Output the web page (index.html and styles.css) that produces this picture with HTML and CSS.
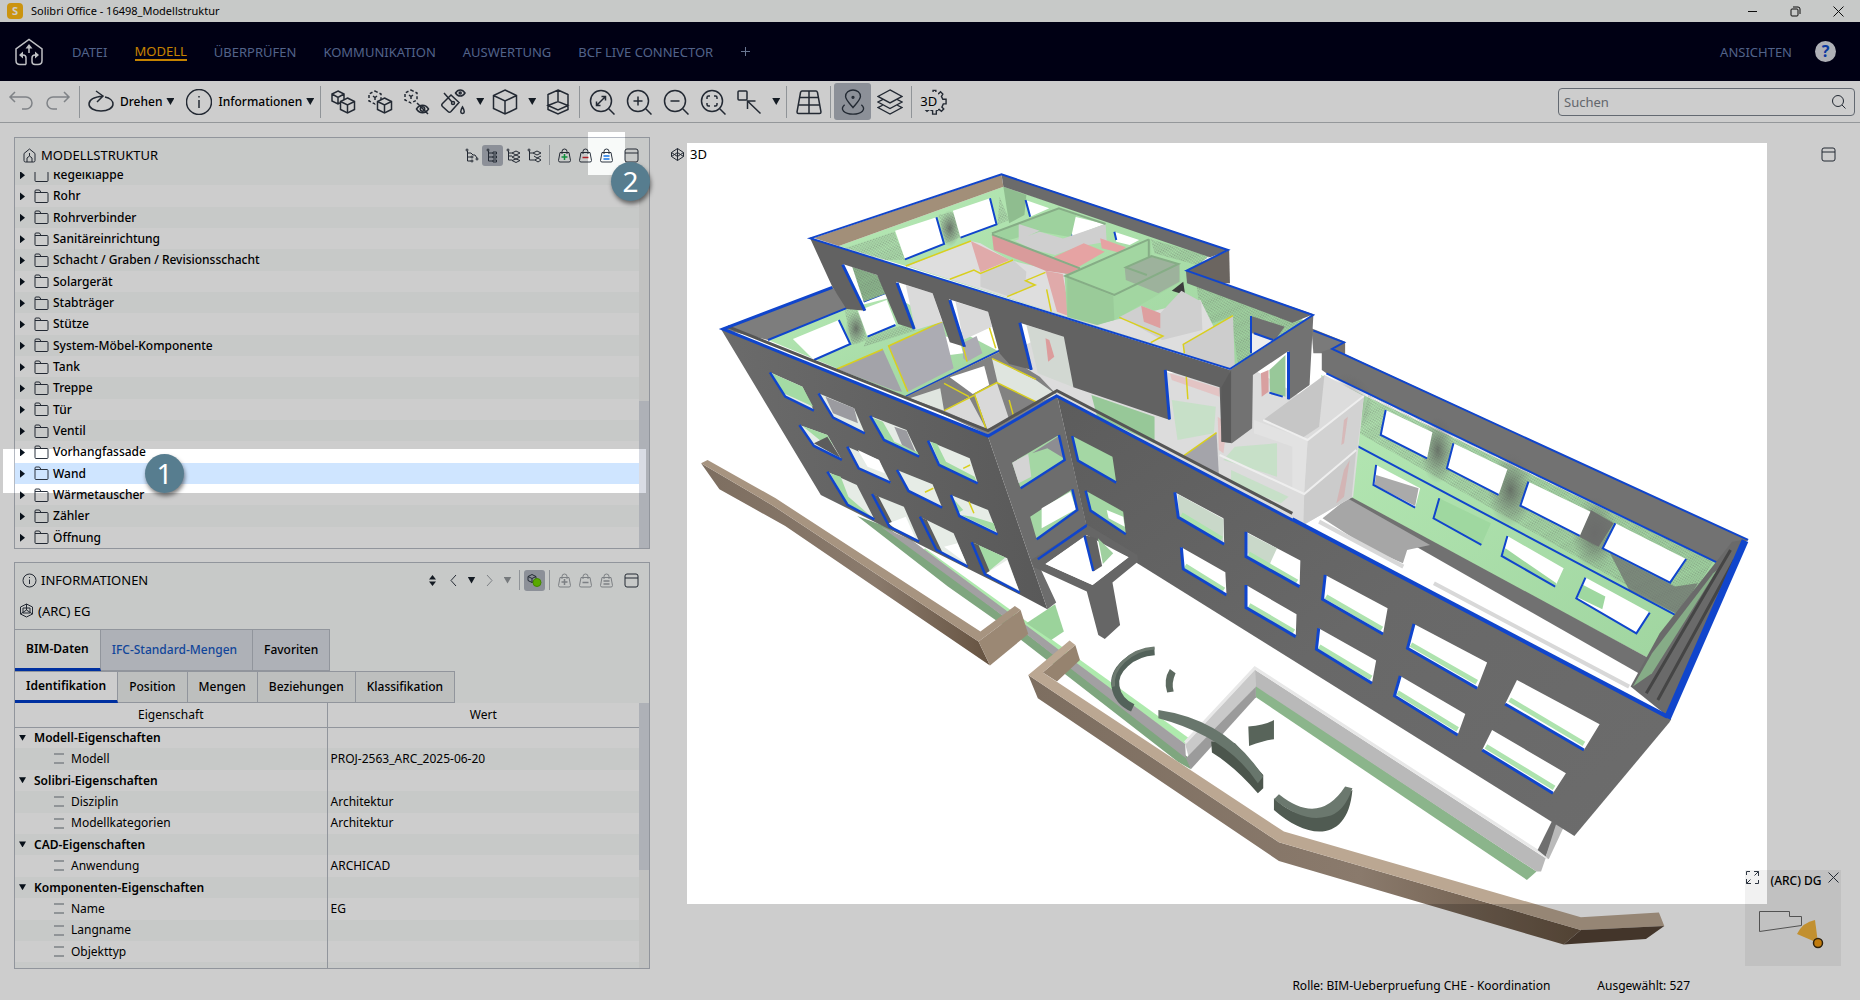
FILE: index.html
```html
<!DOCTYPE html>
<html lang="de">
<head>
<meta charset="utf-8">
<title>Solibri Office - 16498_Modellstruktur</title>
<meta name="viewport" content="width=device-width, initial-scale=1">
<link rel="stylesheet" href="styles.css">
</head>
<body>
<svg class="defs" aria-hidden="true">
  <defs>
    <symbol id="i-undo" viewBox="0 0 26 26"><path d="M7 3 2 8l5 5M2 8h16a5.500 5.500 0 0 1 0 12h-4"/></symbol>
    <symbol id="i-redo" viewBox="0 0 26 26"><path d="m19 3 5 5-5 5M24 8H8a5.500 5.500 0 0 0 0 12h4"/></symbol>
    <symbol id="i-orbit" viewBox="0 0 26 26"><path d="M8 2l7 5-6 6M15 7C6 8 1 11 1 15c0 4 5 7 12 7s12-3 12-7c0-3-3-6-8-7"/></symbol>
    <symbol id="i-info" viewBox="0 0 26 26"><circle cx="13" cy="13" r="12.500"/><path d="M13 11v8M13 7v1.500"/></symbol>
    <symbol id="i-cubes" viewBox="0 0 26 26"><path d="M8 2l6 3v7l-6 3-6-3V5zM2 5l6 3.500L14 5M8 8.500V15"/><path class="knock" d="M17.500 9l7 3.500v8l-7 3.500-7-3.500v-8z"/><path d="M10.500 12.500l7 3.500 7-3.500M17.500 16v8"/></symbol>
    <symbol id="i-cubes-dash" viewBox="0 0 26 26"><path stroke-dasharray="3 2" d="M8 2l6 3v7l-6 3-6-3V5z"/><path d="M6 7l2 1.500L10 7M8 8.500V11"/><path class="knock" d="M17.500 9l7 3.500v8l-7 3.500-7-3.500v-8z"/><path d="M10.500 12.500l7 3.500 7-3.500M17.500 16v8"/></symbol>
    <symbol id="i-cube-hide" viewBox="0 0 26 26"><path stroke-dasharray="3 2" d="M7 1l6 3v7l-6 3-6-3V4z"/><path d="M5 6l2 1.500L9 6M7 7.500V10M12.500 20c3-5 9-5 12 0-3 5-9 5-12 0zM13 14l11 11"/><circle cx="18.500" cy="20" r="2.200"/></symbol>
    <symbol id="i-bucket" viewBox="0 0 26 26"><path d="M11 6l8 7.500-8 9q-1.500 1.500-3 0l-5.500-5q-1.500-1.500 0-3zM4 4l8 9M15.500 4c2.500-4 7-4 9.500 0-2.500 4-7 4-9.500 0zM22.500 18q3.500 6 0 6.500-3.500-.5 0-6.500z"/><circle cx="13" cy="14" r="1.500"/><circle cx="20.200" cy="4" r="1"/></symbol>
    <symbol id="i-cube" viewBox="0 0 26 26"><path d="M13 1l11.500 5.500v13L13 25 1.500 19.500v-13zM1.500 6.500L13 12l11.500-5.500M13 12v13"/></symbol>
    <symbol id="i-section" viewBox="0 0 26 26"><path d="M13 1l10 4.500v15L13 25 3 20.500v-15zM13 1v12M3 16.500l10-4 10 4-10 4.500zM3 5.500L13 1l10 4.500"/></symbol>
    <symbol id="i-zoomfit" viewBox="0 0 26 26"><circle cx="12" cy="12" r="10.500"/><path d="M19.500 19.500l6 6M8 16l8-8M12.500 7.500h4v4M7.500 12.500v4h4"/></symbol>
    <symbol id="i-zoomin" viewBox="0 0 26 26"><circle cx="12" cy="12" r="10.500"/><path d="M19.500 19.500l6 6M7.500 12h9M12 7.500v9"/></symbol>
    <symbol id="i-zoomout" viewBox="0 0 26 26"><circle cx="12" cy="12" r="10.500"/><path d="M19.500 19.500l6 6M7.500 12h9"/></symbol>
    <symbol id="i-zoomsel" viewBox="0 0 26 26"><circle cx="12" cy="12" r="10.500"/><path d="M19.500 19.500l6 6M7 10V8.500Q7 7 8.500 7H10M14 7h1.500Q17 7 17 8.500V10M17 14v1.500q0 1.500-1.500 1.500H14M10 17H8.500Q7 17 7 15.500V14"/></symbol>
    <symbol id="i-pick" viewBox="0 0 26 26"><path d="M3 2h7q1 0 1 1v7q0 1-1 1H3q-1 0-1-1V3q0-1 1-1zM24.500 24.500L12 12.500M11.500 20v-8h8"/></symbol>
    <symbol id="i-grid" viewBox="0 0 26 26"><path d="M6 2h14q1 0 1.500 1.500L25 23q0 1.500-1.500 1.500h-21Q1 24.500 1 23L4.500 3.500Q5 2 6 2zM4 8.500h18M2.500 16h21M13 2v22.500"/></symbol>
    <symbol id="i-pin" viewBox="0 0 28 28"><path d="M14 20C9 14 6 11 6 8a8 7 0 0 1 16 0c0 3-3 6-8 12zM5 17c-6 5 0 10 9 10s15-5 9-10"/><circle cx="14" cy="9" r="1"/></symbol>
    <symbol id="i-layers" viewBox="0 0 28 28"><path d="M14 1l13 7-13 7L1 8zM6 11.500L1 14l13 7 13-7-5-2.500M6 17.500L1 20l13 7 13-7-5-2.500"/></symbol>
    <symbol id="i-gear" viewBox="0 0 28 28"><path d="M13 5V1.500h3V4l3 1 2-2 2.500 2.500L22 8l1.500 3H27v5h-3l-1.500 3.500 2 2L22 24l-2.500-2-3 1.500V27h-4v-3.500L9 22l-2.500 2L4 21.500"/></symbol>
    <symbol id="i-tree1" viewBox="0 0 15 15"><circle cx="3" cy="2" r="1"/><circle cx="13" cy="11" r="1"/><circle cx="8" cy="9" r="1"/><circle cx="8" cy="13" r="1"/><path d="M3.500 3v10H7M3.500 9H7M3.500 5H7l2 2h2l2 3"/></symbol>
    <symbol id="i-tree2" viewBox="0 0 15 15"><circle cx="3" cy="2" r="1"/><path d="M3.500 3v10H8M3.500 9H8M3.500 5H8M8 4h3.500v2H8zM8 8h3.500v2H8zM8 12h3.500v2H8z"/></symbol>
    <symbol id="i-tree3" viewBox="0 0 15 15"><circle cx="2" cy="2" r="1"/><path d="M2.500 3v9H6M2.500 8H6M2.500 5H6M6 5l4-2 4 2-4 2zM6 9l4 2 4-2-4-2zM6 12.500l4 2 4-2-4-1.500z"/></symbol>
    <symbol id="i-tree4" viewBox="0 0 15 15"><circle cx="2" cy="2" r="1"/><path d="M2.500 3v9H8M2.500 5H6M6 5l4-2 4 2-4 2zM7 8l3 2 4-2M8 12l3-2 3 2-3 2z"/></symbol>
    <symbol id="i-bag" viewBox="0 0 15 15"><path d="M3 4.500h9l1.500 8q0 1.500-1.500 1.500H3q-1.500 0-1.500-1.500zM5 6V3.500q0-2.500 2.500-2.500T10 3.500V6"/></symbol>
    <symbol id="i-window" viewBox="0 0 15 15"><rect x="1" y="1" width="13" height="13" rx="2"/><path d="M1 5h13"/></symbol>
    <symbol id="i-house" viewBox="0 0 15 15"><path d="M7.500 1l5.500 4.500v7q0 1.500-1.500 1.500h-8Q2 14 2 12.500v-7zM5 14v-4l2.500-2L10 10v4M7.500 5v3"/></symbol>
    <symbol id="i-folder" viewBox="0 0 15 15"><path d="M1 12.500V2q0-1 1-1h3.500L7 3.500h6q1 0 1 1v8q0 1-1 1H2q-1 0-1-1zM1 3.500h6"/></symbol>
    <symbol id="i-hex" viewBox="0 0 15 15"><path d="M7.500 1l6 3v7l-6 3-6-3V4zM7.500 1v6M1.500 11l6-4 6 4M4 5h7v5H4z"/></symbol>
    <symbol id="i-view3d" viewBox="0 0 15 15"><path d="M7.500 1.500l6 4v4l-6 4-6-4v-4zM1.500 5.500l6 4 6-4M1.500 9.500l6-4 6 4M7.500 1.500v12"/></symbol>
    <symbol id="i-chev-l" viewBox="0 0 15 15"><path d="M10 2L5 7.500l5 5.500"/></symbol>
    <symbol id="i-chev-r" viewBox="0 0 15 15"><path d="M5 2l5 5.500L5 13"/></symbol>
    <symbol id="i-close" viewBox="0 0 15 15"><path d="M2.500 2.500l10 10M12.500 2.500l-10 10"/></symbol>
    <symbol id="i-search" viewBox="0 0 15 15"><circle cx="7" cy="7" r="5.500"/><path d="M11 11l3.500 3.500"/></symbol>
  </defs>
</svg>

<header class="titlebar">
  <span class="app-mark">S</span>
  <h1 class="app-title">Solibri Office - 16498_Modellstruktur</h1>
  <div class="window-buttons">
    <button type="button" aria-label="Minimieren"><svg class="ic15" viewBox="0 0 15 15"><path d="M3 7.500h9"/></svg></button>
    <button type="button" aria-label="Verkleinern"><svg class="ic15" viewBox="0 0 15 15"><rect x="3" y="5" width="7" height="7" rx="1"/><path d="M5 3h5q2 0 2 2v5"/></svg></button>
    <button type="button" aria-label="Schließen"><svg class="ic15"><use href="#i-close"/></svg></button>
  </div>
</header>

<nav class="mainnav">
  <svg class="logo" viewBox="0 0 28 28"><path d="M11 26.500H5q-4 0-4-4V11L14 1.500 27 11v11.500q0 4-4 4h-3q-3 0-3-3V20q0-3 3-3h3M5 17h3q3 0 3 3v6.500M14 15V8"/><path class="logo-tips" d="M10.500 10.500L14 6l3.500 4.500zM8 13.500v7L4 17zM20 13.500v7l4-3.500z"/></svg>
  <a href="#datei">DATEI</a>
  <a href="#modell" class="current">MODELL</a>
  <a href="#pruefen">ÜBERPRÜFEN</a>
  <a href="#kommunikation">KOMMUNIKATION</a>
  <a href="#auswertung">AUSWERTUNG</a>
  <a href="#bcf">BCF LIVE CONNECTOR</a>
  <button type="button" class="nav-add" aria-label="Hinzufügen"><svg class="ic11" viewBox="0 0 11 11"><path d="M1 5.500h9M5.500 1v9"/></svg></button>
  <div class="nav-end">
    <a href="#ansichten">ANSICHTEN</a>
    <button type="button" class="help">?</button>
  </div>
</nav>

<div class="toolbar">
  <button type="button" class="tool faded" aria-label="Rückgängig"><svg><use href="#i-undo"/></svg></button>
  <button type="button" class="tool faded" aria-label="Wiederholen"><svg><use href="#i-redo"/></svg></button>
  <span class="sep"></span>
  <div class="tool-menus">
    <button type="button" class="tool wide"><svg><use href="#i-orbit"/></svg>Drehen<i class="caret"></i></button>
    <button type="button" class="tool wide"><svg><use href="#i-info"/></svg>Informationen<i class="caret"></i></button>
  </div>
  <span class="sep"></span>
  <button type="button" class="tool" aria-label="Anzeigen"><svg><use href="#i-cubes"/></svg></button>
  <button type="button" class="tool" aria-label="Nur anzeigen"><svg><use href="#i-cubes-dash"/></svg></button>
  <button type="button" class="tool" aria-label="Ausblenden"><svg><use href="#i-cube-hide"/></svg></button>
  <button type="button" class="tool wide" aria-label="Färben"><svg><use href="#i-bucket"/></svg><i class="caret"></i></button>
  <button type="button" class="tool wide" aria-label="Ansicht"><svg><use href="#i-cube"/></svg><i class="caret"></i></button>
  <button type="button" class="tool" aria-label="Schnitt"><svg><use href="#i-section"/></svg></button>
  <span class="sep"></span>
  <button type="button" class="tool" aria-label="Alles zoomen"><svg><use href="#i-zoomfit"/></svg></button>
  <button type="button" class="tool" aria-label="Vergrößern"><svg><use href="#i-zoomin"/></svg></button>
  <button type="button" class="tool" aria-label="Verkleinern"><svg><use href="#i-zoomout"/></svg></button>
  <button type="button" class="tool" aria-label="Auswahl zoomen"><svg><use href="#i-zoomsel"/></svg></button>
  <button type="button" class="tool wide" aria-label="Auswählen"><svg><use href="#i-pick"/></svg><i class="caret"></i></button>
  <span class="sep"></span>
  <button type="button" class="tool" aria-label="Raster"><svg><use href="#i-grid"/></svg></button>
  <span class="sep"></span>
  <button type="button" class="tool pressed" aria-label="Karte"><svg><use href="#i-pin"/></svg></button>
  <button type="button" class="tool" aria-label="Ebenen"><svg><use href="#i-layers"/></svg></button>
  <span class="sep"></span>
  <button type="button" class="tool gear" aria-label="3D-Einstellungen"><svg><use href="#i-gear"/></svg><span class="gear-text">3D</span></button>
  <label class="search"><input type="text" placeholder="Suchen" aria-label="Suchen"><svg class="ic15"><use href="#i-search"/></svg></label>
</div>

<main class="workspace">
  <div class="side">
    <section class="panel">
      <div class="panel-head">
        <svg class="ic15"><use href="#i-house"/></svg>
        <h2>MODELLSTRUKTUR</h2>
        <div class="panel-tools">
          <button type="button" aria-label="Baum"><svg class="ic15"><use href="#i-tree1"/></svg></button>
          <button type="button" class="pressed" aria-label="Komponenten"><svg class="ic15"><use href="#i-tree2"/></svg></button>
          <button type="button" aria-label="Ebenen"><svg class="ic15"><use href="#i-tree3"/></svg></button>
          <button type="button" aria-label="Gruppen"><svg class="ic15"><use href="#i-tree4"/></svg></button>
          <span class="minisep"></span>
          <button type="button" aria-label="Zum Korb"><svg class="ic15"><use href="#i-bag"/></svg><svg class="ic15 mark green" viewBox="0 0 15 15"><path d="M4.500 9h6M7.500 6v6"/></svg></button>
          <button type="button" aria-label="Aus Korb"><svg class="ic15"><use href="#i-bag"/></svg><svg class="ic15 mark red" viewBox="0 0 15 15"><path d="M4.500 9.500h6"/></svg></button>
          <button type="button" aria-label="Korb setzen"><svg class="ic15"><use href="#i-bag"/></svg><svg class="ic15 mark azure" viewBox="0 0 15 15"><path d="M4.500 8h6M4.500 11h6"/></svg></button>
          <button type="button" class="win" aria-label="Fenster"><svg class="ic15"><use href="#i-window"/></svg></button>
        </div>
      </div>
      <div class="tree-view">
        <ul class="tree">
          <li><svg class="ic15"><use href="#i-folder"/></svg>Regelklappe</li>
          <li><svg class="ic15"><use href="#i-folder"/></svg>Rohr</li>
          <li><svg class="ic15"><use href="#i-folder"/></svg>Rohrverbinder</li>
          <li><svg class="ic15"><use href="#i-folder"/></svg>Sanitäreinrichtung</li>
          <li><svg class="ic15"><use href="#i-folder"/></svg>Schacht / Graben / Revisionsschacht</li>
          <li><svg class="ic15"><use href="#i-folder"/></svg>Solargerät</li>
          <li><svg class="ic15"><use href="#i-folder"/></svg>Stabträger</li>
          <li><svg class="ic15"><use href="#i-folder"/></svg>Stütze</li>
          <li><svg class="ic15"><use href="#i-folder"/></svg>System-Möbel-Komponente</li>
          <li><svg class="ic15"><use href="#i-folder"/></svg>Tank</li>
          <li><svg class="ic15"><use href="#i-folder"/></svg>Treppe</li>
          <li><svg class="ic15"><use href="#i-folder"/></svg>Tür</li>
          <li><svg class="ic15"><use href="#i-folder"/></svg>Ventil</li>
          <li><svg class="ic15"><use href="#i-folder"/></svg>Vorhangfassade</li>
          <li class="selected"><svg class="ic15"><use href="#i-folder"/></svg>Wand</li>
          <li><svg class="ic15"><use href="#i-folder"/></svg>Wärmetauscher</li>
          <li><svg class="ic15"><use href="#i-folder"/></svg>Zähler</li>
          <li><svg class="ic15"><use href="#i-folder"/></svg>Öffnung</li>
        </ul>
        <div class="scroll end"><span class="thumb tree-thumb"></span></div>
      </div>
    </section>

    <section class="panel info">
      <div class="panel-head">
        <svg class="ic15" viewBox="0 0 15 15"><circle cx="7.500" cy="7.500" r="6.500"/><path d="M7.500 6.500v4.500M7.500 4v1"/></svg>
        <h2>INFORMATIONEN</h2>
        <div class="panel-tools">
          <button type="button" aria-label="Sortieren"><svg class="ic15" viewBox="0 0 15 15"><path class="solid" d="M4 6.500L7.500 2 11 6.500zM4 8.500L7.500 13 11 8.500z"/></svg></button>
          <button type="button" aria-label="Zurück"><svg class="ic15"><use href="#i-chev-l"/></svg></button>
          <button type="button" class="slim" aria-label="Verlauf"><i class="caret"></i></button>
          <button type="button" class="faded" aria-label="Vor"><svg class="ic15"><use href="#i-chev-r"/></svg></button>
          <button type="button" class="slim faded" aria-label="Verlauf vor"><i class="caret"></i></button>
          <span class="minisep"></span>
          <button type="button" class="pressed" aria-label="Auswahl folgen"><svg class="ic15" viewBox="0 0 15 15"><path d="M5 1.500l4 2v4l-4 2-4-2v-4zM1 3.500l4 2 4-2M5 5.500v4"/><circle class="dot" cx="10" cy="9.500" r="4"/></svg></button>
          <span class="minisep"></span>
          <button type="button" class="faded" aria-label="Zum Korb"><svg class="ic15"><use href="#i-bag"/></svg><svg class="ic15 mark" viewBox="0 0 15 15"><path d="M4.500 9h6M7.500 6v6"/></svg></button>
          <button type="button" class="faded" aria-label="Aus Korb"><svg class="ic15"><use href="#i-bag"/></svg><svg class="ic15 mark" viewBox="0 0 15 15"><path d="M4.500 9.500h6"/></svg></button>
          <button type="button" class="faded" aria-label="Korb setzen"><svg class="ic15"><use href="#i-bag"/></svg><svg class="ic15 mark" viewBox="0 0 15 15"><path d="M4.500 8h6M4.500 11h6"/></svg></button>
          <button type="button" class="win" aria-label="Fenster"><svg class="ic15"><use href="#i-window"/></svg></button>
        </div>
      </div>
      <p class="subject"><svg class="ic15"><use href="#i-hex"/></svg>(ARC) EG</p>
      <div class="tabs main-tabs" role="tablist">
        <button type="button" role="tab" class="active">BIM-Daten</button>
        <button type="button" role="tab" class="link">IFC-Standard-Mengen</button>
        <button type="button" role="tab">Favoriten</button>
      </div>
      <div class="tabs sub-tabs" role="tablist">
        <button type="button" role="tab" class="active">Identifikation</button>
        <button type="button" role="tab">Position</button>
        <button type="button" role="tab">Mengen</button>
        <button type="button" role="tab">Beziehungen</button>
        <button type="button" role="tab">Klassifikation</button>
      </div>
      <div class="table-view">
        <table class="props">
          <thead><tr><th>Eigenschaft</th><th>Wert</th></tr></thead>
          <tbody>
            <tr class="group"><td>Modell-Eigenschaften</td><td></td></tr>
            <tr><td>Modell</td><td>PROJ-2563_ARC_2025-06-20</td></tr>
            <tr class="group"><td>Solibri-Eigenschaften</td><td></td></tr>
            <tr><td>Disziplin</td><td>Architektur</td></tr>
            <tr><td>Modellkategorien</td><td>Architektur</td></tr>
            <tr class="group"><td>CAD-Eigenschaften</td><td></td></tr>
            <tr><td>Anwendung</td><td>ARCHICAD</td></tr>
            <tr class="group"><td>Komponenten-Eigenschaften</td><td></td></tr>
            <tr><td>Name</td><td>EG</td></tr>
            <tr><td>Langname</td><td></td></tr>
            <tr><td>Objekttyp</td><td></td></tr>
            <tr class="filler"><td></td><td></td></tr>
          </tbody>
        </table>
        <div class="scroll"><span class="thumb table-thumb"></span></div>
      </div>
    </section>
  </div>

  <section class="viewer">
    <svg class="scene" viewBox="664 123 1196 846" preserveAspectRatio="xMinYMin meet" role="img" aria-label="3D-Modell des Gebäudes">
      <defs>
        <linearGradient id="g-front" x1="0" y1="0" x2="1" y2="1"><stop offset="0" stop-color="#5c5c5c"/><stop offset=".5" stop-color="#686868"/><stop offset="1" stop-color="#6c6c6c"/></linearGradient>
        <linearGradient id="g-left" x1="0" y1="0" x2="1" y2="0"><stop offset="0" stop-color="#6b6b6b"/><stop offset="1" stop-color="#595959"/></linearGradient>
        <linearGradient id="g-brown" x1="0" y1="0" x2="1" y2="0"><stop offset="0" stop-color="#7d6e60"/><stop offset=".6" stop-color="#8a7a6c"/><stop offset="1" stop-color="#665341"/></linearGradient>
        <linearGradient id="g-green" x1="0" y1="0" x2="1" y2="1"><stop offset="0" stop-color="#b5e8b4"/><stop offset="1" stop-color="#9fd49f"/></linearGradient>
        <pattern id="hatch" width="6" height="6" patternUnits="userSpaceOnUse" patternTransform="rotate(24)"><path d="M0 1.500h3M3 4.500h3" stroke="#555" stroke-width="2" opacity=".5"/></pattern>
        <radialGradient id="g-shade"><stop offset="0" stop-color="#555" stop-opacity=".75"/><stop offset="1" stop-color="#666" stop-opacity="0"/></radialGradient>
      </defs>
      <g class="model" transform="translate(680 140) scale(.3827 .3333)">
        <!-- retaining walls -->
        <path fill="#7fa67f" d="M463 1128L540 1160 1325 1850 1335 1888 1300 1865 830 1445 700 1340z"/>
        <path fill="#aeeaad" d="M640 1225L1330 1795 1320 1812 630 1240z"/>
        <path fill="#a2a0a2" d="M525 1160L605 1200 1320 1812 1322 1855 860 1442z"/>
        <path fill="#c9c9c9" d="M1320 1812L1505 1585V1640L1330 1855z"/>
        <path fill="#9b9b9b" d="M1322 1855L1505 1640V1672L1335 1888z"/>
        <path fill="#8bb58b" d="M1505 1636L2238 2195 2213 2220 1505 1672z"/>
        <path fill="#b9b9b9" d="M1503 1590L2262 2155 2250 2195 2238 2195 1505 1640z"/>
        <path class="edge" stroke="#e8e8e8" stroke-width="3" d="M1320 1808L1502 1584 2270 2155"/>
        <path fill="#6e6e6e" d="M2241 2130L2280 2040 2300 2050 2262 2150z"/>
        <path fill="#bababa" d="M2262 2150L2290 2050 2310 2060 2270 2158z"/>
        <path fill="#9bd39b" d="M905 1450L980 1393 1003 1475 970 1500z"/>
        <!-- terrain walls -->
        <path fill="url(#g-brown)" d="M55 970L240 1095 780 1505 810 1577 275 1158 103 1048z"/>
        <path fill="#a79480" d="M55 970L72 960 250 1075 785 1475 875 1398 890 1410 780 1505 240 1095z"/>
        <path fill="#9b8874" d="M780 1505L890 1410 910 1482 810 1577z"/>
        <path fill="#96836f" d="M948 1598L1033 1515 1045 1560 985 1625z"/>
        <path fill="url(#g-brown)" d="M910 1605L1565 2107 2354 2370 2309 2414 1565 2163 935 1675z"/>
        <path fill="#bba792" d="M910 1605L1018 1502 1033 1515 948 1598 1578 2075 2354 2332 2558 2318 2572 2358 2354 2370 1565 2107z"/>
        <path fill="#544335" d="M2354 2370L2572 2358 2524 2397 2309 2414z"/>
        <!-- garden benches -->
        <path class="edge" stroke="#53625a" stroke-width="8" d="M1240 1534C1180 1538 1130 1590 1138 1640 1142 1670 1160 1692 1183 1704"/>
        <path class="edge" stroke="#6d7a70" stroke-width="3" d="M1240 1524C1175 1528 1125 1590 1133 1640"/>
        <path fill="#5d6a60" d="M1280 1587L1295 1600Q1283 1630 1290 1655L1273 1658Q1262 1620 1280 1587z"/>
        <path fill="#4c564d" d="M1388 1805L1390 1838Q1450 1880 1510 1960L1524 1945V1905L1450 1810z"/>
        <path fill="#68766c" d="M1250 1710Q1430 1740 1524 1910L1510 1930Q1430 1790 1250 1735z"/>
        <path fill="#58645a" d="M1485 1760Q1530 1755 1552 1740V1798Q1530 1800 1487 1818z"/>
        <path fill="#505b52" d="M1552 1975Q1650 2080 1740 1965L1757 1950C1745 2110 1640 2100 1552 2010z"/>
        <path fill="#6b786e" d="M1565 1963Q1670 2060 1738 1940L1757 1945Q1735 2020 1690 2030 1630 2050 1552 1978z"/>

        <!-- rear long wall -->
        <path fill="#7a7a7a" d="M1650 565L1738 605 1700 630 1679 640 1655 640z"/>
        <path fill="#777069" d="M1738 605V645L1705 628z"/>
        <path fill="#727272" d="M1677 635L1704 625 2791 1200 2749 1230 2709 1267 1689 700 1677 690z"/>
        <path fill="url(#g-green)" d="M1675 705L2709 1267 2610 1430 2540 1560 1740 1070 1690 800z"/>
        <path fill="#717171" d="M1744 1065L2540 1560 2505 1600 1740 1100z"/>
        <path fill="#a6a6a6" d="M1679 1135L1744 1075 1960 1215 1900 1230 1889 1270 1800 1225z"/>
        <path class="edge" stroke="#d8d8d8" stroke-width="4" d="M1670 1145L1890 1280M1970 1330L2480 1640"/>
        <ellipse cx="1740" cy="790" rx="70" ry="90" fill="url(#g-shade)"/>
        <ellipse cx="1980" cy="930" rx="45" ry="100" fill="url(#g-shade)"/>
        <ellipse cx="2170" cy="1050" rx="60" ry="110" fill="url(#g-shade)"/>
        <ellipse cx="2390" cy="1180" rx="60" ry="110" fill="url(#g-shade)"/>
        <path fill="url(#hatch)" d="M1775 880L1800 760 2700 1265 2610 1425z"/>
        <path fill="#6c6c6c" opacity=".9" d="M2380 1110L2440 1150 2400 1220 2350 1190z"/>
        <path fill="#6c6c6c" opacity=".7" d="M2430 1240L2600 1340 2660 1330 2610 1425 2480 1350z"/>
        <path fill="#fff" d="M1844 810L1966 877 1952 955 1831 885zM2021 910L2162 988 2139 1065 2004 985zM2217 1025L2379 1115 2351 1188 2196 1097zM2444 1150L2629 1257 2587 1328 2411 1225zM1819 975L1934 1045 1921 1103 1812 1035zM2162 1188L2309 1285 2287 1340 2147 1248zM2366 1313L2534 1418 2499 1480 2342 1375z"/>
        <path fill="#9fd8a0" d="M1984 1075L2119 1150 2094 1215 1969 1135zM2157 1225L2290 1330 2287 1340 2147 1248zM2360 1335L2418 1370 2410 1408 2345 1372z"/>
        <path fill="#aaa" d="M1819 1005L1930 1045 1921 1098 1815 1035z"/>
        <path class="blue" stroke-width="2" d="M1844 810L1831 885 1952 955M2021 910L2004 985 2139 1065M2217 1025L2196 1097 2351 1188M2444 1150L2411 1225 2587 1328 2629 1257M1819 975L1812 1035 1921 1103M1984 1075L1969 1135 2094 1215M2162 1188L2147 1248 2287 1340M2366 1313L2342 1375 2499 1480 2534 1418"/>
        <path class="blue" stroke-width="2" d="M1689 700L2709 1267M1769 918L2609 1430"/>
        <path class="blue" stroke-width="2" d="M1655 572L1735 607 1704 627 2791 1200"/>
        <!-- right end wall -->
        <path fill="#6a6a6a" d="M2749 1205L2780 1200 2587 1735 2484 1640 2560 1480z"/>
        <path fill="#8dbd8e" opacity=".8" d="M2700 1300L2710 1290 2540 1600 2490 1640 2540 1540z"/>
        <path class="edge" stroke="#454545" stroke-width="3" d="M2745 1230L2525 1660M2755 1260L2555 1680"/>

        <!-- middle interior -->
        <path fill="#dcdcdc" d="M830 655L1000 560 1280 700 1500 690 1640 780 1684 705 1787 768 1759 1070 1629 1155 985 765z"/>
        <path fill="#97c898" d="M1075 765L1240 830V910L1090 830z"/>
        <path fill="#b9e2ba" opacity=".6" d="M1285 780L1400 800 1395 880 1300 900zM1450 920L1560 910V1010L1420 960zM1440 990L1590 1070 1570 1090 1440 1030z"/>
        <path fill="#e8b4b4" opacity=".6" d="M1280 700L1410 745V770L1285 720zM1405 830L1430 850 1420 940 1408 930z"/>
        <path fill="#a4a4aa" d="M1313 950L1402 878 1408 1003z"/>
        <path class="yellow" d="M1313 950L1402 878M1323 710L1327 778"/>
        <path fill="#c6c6c6" d="M1524 840L1684 705 1670 860 1625 895z"/>
        <path fill="#d2d2d2" d="M1640 900L1787 768 1769 930 1631 1060z"/>
        <path fill="#e2e2e2" d="M1500 840L1640 900 1631 1058 1600 1050V920L1500 880z"/>
        <path fill="#cbcbcb" d="M1631 1065L1767 930 1755 1072 1629 1155z"/>
        <path fill="#dca0a0" opacity=".5" d="M1735 840L1745 830 1735 910 1728 915zM1735 990L1750 960 1735 1070 1715 1090z"/>
        <path class="edge" stroke="#eee" stroke-width="2" d="M1524 840L1640 900 1787 768M1410 945L1631 1062 1767 930"/>

        <!-- lower left block, inside -->
        <path fill="#7d7d7d" d="M107 567L398 440 440 505 230 600z"/>
        <path fill="url(#g-green)" d="M230 600L440 505 560 470 835 635 590 770z"/>
        <path fill="url(#hatch)" d="M430 510L460 500 490 600 450 615zM490 590L610 545 620 570 480 620z"/>
        <ellipse cx="460" cy="565" rx="28" ry="50" fill="url(#g-shade)"/>
        <path fill="#fff" d="M295 597L415 540 445 612 350 660zM465 512L540 480 565 555 490 590zM690 588L730 600 740 640 705 645z"/>
        <path class="blue" stroke-width="2" d="M230 600L440 502M480 485L540 458M415 540L445 612 350 660M490 590L563 555M590 770L835 632"/>
        <path fill="#a3a3a9" d="M410 687L530 628 580 755 562 752z"/>
        <path fill="#acacb3" d="M545 618L685 545 715 685 595 755zM740 655L738 610 775 588 790 640 750 665z"/>
        <path fill="#828282" d="M590 770L835 635 940 710 985 765 805 885z"/>
        <path fill="#fff" d="M705 712L795 678 808 735 765 762z"/>
        <path fill="#dfe5df" d="M600 775L680 745 690 812zM815 655L930 720 985 765 935 788 830 728z"/>
        <path fill="#d9d9d9" d="M690 812L755 772 800 868zM770 762L828 728 860 838 803 868z"/>
        <path class="yellow" d="M410 687L530 628M595 755L545 618 685 545M740 620L750 665M805 550L825 625M815 655L930 718M690 812L770 765 800 868M770 762L828 728 935 788M690 730L755 770M860 780L872 830"/>

        <!-- tower, inside -->
        <path fill="url(#g-green)" d="M415 318L845 140 1385 345 1330 400 1640 545 1450 690 590 378z"/>
        <path fill="#a28f79" d="M350 294L840 104 845 140 415 318z"/>
        <path fill="#8fbd8f" d="M845 140L905 165 900 225 860 250z"/>
        <path fill="url(#hatch)" d="M430 325L560 275 590 360 520 360zM675 225L715 215 735 290 695 310zM835 170L860 240 830 255zM1230 298L1385 350 1350 375 1240 340zM1350 440L1640 550 1460 690 1440 530 1365 560z"/>
        <ellipse cx="705" cy="265" rx="28" ry="55" fill="url(#g-shade)"/>
        <path fill="#6b6b6b" d="M840 102L1435 330 1385 352 845 140z"/>
        <path fill="#fff" d="M562 272L670 232 690 312 588 358zM713 212L810 175 827 253 733 293zM903 180L965 205 915 230zM1013 225L1110 252 1023 290zM1135 275L1200 300 1175 315 1140 305z"/>
        <path class="blue" stroke-width="2" d="M670 232L690 312 588 358M810 175L827 253 733 293M903 180L915 230M1013 225L1023 290M1135 275L1140 300"/>
        <path fill="#dedede" d="M595 378L760 303 785 310 860 360 1005 400 1100 550 1360 480 1450 690z"/>
        <path fill="#cfcfcf" d="M785 400L870 360 905 395 903 422 928 435 855 468 785 440z"/>
        <path fill="#9ed29e" d="M815 278L990 205 1035 225 1022 292 940 275 860 300z"/>
        <path fill="#cfcfcf" d="M885 252L940 272 885 300zM875 302L940 275 1005 297 925 330zM920 328L1112 252 1115 305 1040 320 980 345z"/>
        <path fill="#d99b9b" d="M815 283L1045 385 1015 402 955 392 820 330z"/>
        <path fill="#e6a3a3" d="M975 352L1055 310 1110 335 1040 382zM1098 295L1165 322 1150 338 1102 325z"/>
        <path fill="#e0aaaa" d="M760 303L862 360 785 397zM955 392L1000 402 1020 530 985 515z"/>
        <path fill="#a2d6a1" d="M1005 408L1230 295 1232 350 1305 372 1308 425 1135 540 1090 555 1012 530z"/>
        <path fill="#92c092" d="M1012 412L1132 468 1135 540 1090 555 1012 530z" opacity=".5"/>
        <path fill="#9a9a9a" opacity=".6" d="M1162 382L1230 350 1305 372 1305 425 1250 460 1165 420z"/>
        <path class="edge" stroke="#86ad86" stroke-width="2" d="M1225 298L1007 408 1135 465 1302 372 1232 348 1165 382 1220 405M815 280L990 205 1112 252M815 283L1045 385M1225 298V350"/>
        <path fill="#3c3c3c" d="M1285 452L1315 425 1320 465z"/>
        <path fill="#cfcfcf" d="M1150 530L1205 497 1255 520 1310 452 1362 485 1365 570 1260 600z"/>
        <path fill="#de9f9f" d="M1205 497L1255 520 1255 565 1212 545z"/>
        <path fill="#cdcdcd" d="M1315 613L1445 527 1450 690 1318 640z"/>
        <path class="yellow" d="M590 378L760 303M705 418L768 390 785 400 870 360M955 397L903 422 928 435 855 470M958 448L970 515M1148 532L1262 588 1230 608M1445 527L1315 613 1318 640"/>
        <path fill="#eee" d="M1492 570L1560 605 1495 645z"/>
        <path fill="#707070" d="M1492 528L1580 560 1555 600 1495 580z"/>
        <path class="blue" stroke-width="2" d="M1492 640V528M1500 580L1550 600"/>
        <path fill="#6b6560" d="M1322 392L1435 330 1437 430 1420 430z"/>
        <path fill="#6b6b6b" d="M1322 392L1655 523 1600 548 1325 430z"/>

        <!-- tower, outer faces -->
        <path fill="#8ebb8f" d="M450 380L515 405 540 460 480 485z"/>
        <path fill="url(#hatch)" d="M450 380L515 405 540 460 480 485z"/>
        <path fill="#dadada" d="M590 435L660 460 685 545 615 570zM720 485L805 515 815 560 740 600z"/>
        <path fill="#d2d8d2" d="M905 555L1003 590 1028 742 935 700z"/>
        <path fill="#dc9c9c" d="M955 595L965 600 978 650 962 665z"/>
        <path fill="#626262" d="M340 295L1437 690 1440 860 1415 905 1410 742 1268 690 1280 840 1028 742 1003 590 888 548 920 690 860 672 835 640 805 515 703 478 747 622 705 607 660 460 565 425 614 568 570 552 515 405 425 372 485 512 435 507 398 440z"/>
        <path fill="#727272" d="M1437 690L1655 525 1645 735 1590 780 1590 633 1497 705 1495 865 1442 910 1415 905z"/>
        <path fill="#5a5a5a" d="M1415 742L1440 690V908L1415 905z"/>
        <path fill="#98c899" d="M1540 690L1582 645 1582 770 1542 755z"/>
        <path fill="#d8a0a0" d="M1518 700L1538 690 1538 755 1520 770z"/>
        <path class="blue" stroke-width="3" d="M425 374L483 512M567 428L612 567M705 480L743 620M888 548L918 690M1268 690L1279 838M1590 635V778"/>
        <path class="blue" stroke-width="2" d="M1540 758L1575 770M340 295L840 103 1432 330 1324 392 1654 525 1437 687z"/>

        <!-- facades -->
        <path fill="url(#g-left)" d="M107 567L805 890 960 1408 890 1365 368 1065z"/>
        <path fill="#6d6d6d" d="M805 890L985 765 1062 1155 932 1262 983 1388 960 1408z"/>
        <path fill="url(#g-front)" d="M985 765L2590 1738 2585 1748 2337 2088 1195 1270 1062 1158z"/>
        <path fill="#e6ece6" d="M235 697L320 740 350 812 275 770zM362 760L455 805 483 880 400 833zM497 828L592 870 625 950 533 900zM648 902L757 955 778 1030 677 975zM312 855L385 885 423 960 350 918zM437 920L520 960 550 1028 467 985zM567 990L660 1033 685 1103 597 1053zM708 1065L805 1110 830 1183 730 1128zM385 995L462 1035 508 1138 438 1095zM502 1062L585 1100 625 1205 547 1160zM627 1130L715 1180 752 1280 670 1230zM762 1207L855 1255 888 1358 797 1303z"/>
        <path fill="#a4dba4" d="M240 700L320 740 348 800 300 775 270 760zM320 858L385 885 400 915 365 900zM500 832L530 845 560 905 620 935 625 948 535 898zM655 905L672 912 695 965 770 1010 775 1025 680 975zM392 1000L420 1010 440 1070 500 1130 438 1092zM765 1130L820 1150 825 1175 735 1125zM770 1210L850 1253 800 1300zM740 1110L725 1120 710 1070z"/>
        <path fill="#9b9ba0" d="M380 770L455 805 465 850 400 820zM560 860L592 872 615 935 580 915z"/>
        <path fill="#5c5c5c" d="M350 910L385 890 420 955zM502 1062L518 1068 562 1165 547 1160zM627 1130L645 1140 685 1235 670 1230zM762 1207L780 1215 815 1310 797 1303z"/>
        <path fill="#fff" d="M465 930L520 960 535 1000 490 980zM545 1150L590 1130 615 1195 560 1165zM800 1300L855 1260 885 1350zM690 1220L725 1210 748 1270z"/>
        <path class="yellow" d="M740 985L758 975M640 1057L662 1045M755 1085L768 1120"/>
        <path class="blue" stroke-width="2.500" d="M235 697L275 770 350 812M362 760L400 833 483 880M497 828L533 900 625 950M648 902L677 975 778 1030M312 855L350 918 423 960M437 920L467 985 550 1028M567 990L597 1053 685 1103M708 1065L730 1128 830 1183M385 995L438 1095 508 1138M502 1062L547 1160 625 1205M627 1130L670 1230 752 1280M762 1207L797 1303 888 1358"/>
        <path fill="#a4d7a4" d="M868 968L990 885 1005 960 890 1045zM915 1130L1025 1048 1038 1110 932 1198zM1025 888L1130 950 1140 1028 1040 962zM1060 1052L1158 1115 1165 1183 1073 1112z"/>
        <path fill="#d4d4d4" d="M868 968L910 942 918 1010 885 1030z"/>
        <path fill="#8d8d92" d="M920 940L990 888 1003 955 960 925z"/>
        <path fill="#fff" d="M945 1105L1020 1055 1035 1108 945 1165zM1115 1110L1158 1130 1162 1160 1120 1135z"/>
        <path class="blue" stroke-width="2.500" d="M990 885L1005 960 890 1045M1025 1048L1038 1110 932 1198M1025 888L1040 962 1140 1028M1060 1052L1073 1112 1165 1183M935 1260L1065 1155"/>
        <path fill="#fff" d="M1293 1057L1420 1135 1422 1213 1302 1132zM1479 1175L1621 1262 1619 1340 1479 1250zM1686 1305L1849 1405 1837 1482 1679 1378zM1918 1452L2109 1568 2083 1645 1901 1525zM2187 1620L2403 1753 2362 1830 2156 1692zM1310 1222L1425 1297 1428 1365 1315 1287zM1479 1335L1611 1423 1609 1490 1479 1403zM1669 1465L1819 1562 1808 1630 1663 1528zM1882 1608L2052 1722 2032 1785 1867 1668zM2122 1770L2315 1900 2281 1960 2096 1830z"/>
        <path fill="#c9d8c9" d="M1300 1062L1420 1137V1208L1304 1130zM1483 1180L1560 1225 1540 1275 1483 1240z"/>
        <path class="edge" stroke="#aee3ae" stroke-width="5" d="M1310 1124L1415 1197M1486 1242L1612 1326M1688 1370L1834 1467M1910 1514L2082 1627M2168 1679L2362 1812M1320 1278L1421 1350M1487 1396L1604 1475M1670 1520L1806 1614M1875 1658L2032 1768M2106 1819L2284 1944"/>
        <path class="blue" stroke-width="3" d="M1293 1057L1302 1132 1422 1213M1479 1175V1250L1619 1340M1686 1305L1679 1378 1837 1482M1918 1452L1901 1525 2083 1645M2156 1692L2362 1830M1310 1222L1315 1287 1428 1365M1479 1335V1403L1609 1490M1669 1465L1663 1528 1808 1630M1882 1608L1867 1668 2032 1785M2096 1830L2281 1960"/>
        <path class="edge" stroke="#555" stroke-width="3" d="M125 560L805 872 985 752 1600 1120"/>
        <path class="blue" stroke-width="3" d="M398 442L112 567 805 888 984 768 1600 1140"/>
        <path class="blue" stroke-width="4" d="M1600 1138L2580 1730"/>
        <path class="blue" stroke-width="7" d="M2580 1735L2783 1202"/>
        <!-- entrance canopy -->
        <path fill="#666" fill-rule="evenodd" d="M917 1260L1065 1155 1195 1245 1197 1265 1130 1328 1150 1455 1110 1497 1093 1485 1063 1355 925 1282zM955 1272L1078 1335 1172 1252 1062 1185z"/>
        <path fill="#fff" d="M955 1272L1058 1190 1172 1252 1078 1335z"/>
        <path fill="#9fd09f" d="M1092 1195L1132 1240 1105 1272z"/>
        <path fill="#626262" d="M1057 1185L1088 1195 1103 1278 1080 1295z"/>
        <path class="blue" stroke-width="2.500" d="M1057 1187L1080 1293M935 1258L1062 1157"/>
      </g>
    </svg>
    <div class="viewer-head">
      <svg class="ic15"><use href="#i-view3d"/></svg>
      <h2>3D</h2>
      <button type="button" class="win" aria-label="Fenster"><svg class="ic15"><use href="#i-window"/></svg></button>
    </div>
    <aside class="minimap">
      <div class="minimap-head">
        <button type="button" aria-label="Vergrößern"><svg class="ic15" viewBox="0 0 15 15"><path d="M1.500 5v-3.500H5M9 1.500h4.500V6M9.500 5.500l4-4M13.500 10v3.500H10M6 13.500H1.500V9M1.500 13.500l4-4"/></svg></button>
        <h3>(ARC) DG</h3>
        <button type="button" aria-label="Schließen"><svg class="ic15"><use href="#i-close"/></svg></button>
      </div>
      <svg class="plan" viewBox="0 0 96 66"><path stroke="#666" d="M14.500 11.500h30v5h12v9l-42 6z"/><path fill="#f2a81c" opacity=".85" d="M73 43L52 34q6-12 18-14z"/><circle cx="73" cy="43" r="4.500" fill="#f29b12" stroke="#3a2a10" stroke-width="1.500"/></svg>
    </aside>
  </section>
</main>

<footer class="status">
  <span>Rolle: BIM-Ueberpruefung CHE - Koordination</span>
  <span>Ausgewählt: 527</span>
</footer>

<svg class="spotlight" aria-hidden="true"><path fill-rule="evenodd" d="M0 0H9999V9999H0zM3 449H646V493H3zM588 132H625V175H588zM687 143H1767V904H687z"/></svg>
<span class="step step-one">1</span>
<span class="step step-two">2</span>
</body>
</html>
```
FILE: styles.css
```css
* { box-sizing: border-box; }

body {
  position: relative;
  display: flex;
  flex-direction: column;
  min-height: 100vh;
  margin: 0;
  background: #fff;
  color: #000;
  font: 400 12px/20px "Noto Sans", "Open Sans", sans-serif;
  overflow-x: hidden;
}

h1, h2, h3, p, ul { margin: 0; padding: 0; font: inherit; }
h2 { font-size: 13px; }
button { margin: 0; padding: 0; border: 0; background: none; color: inherit; font: inherit; }
svg { display: block; flex: none; fill: none; stroke: #2c3440; stroke-width: 1.500; }
.defs { position: absolute; width: 0; height: 0; }
.ic15 { width: 15px; height: 15px; stroke-width: 1; }
.ic11 { width: 11px; height: 11px; stroke-width: 1; }
.knock { fill: #fff; }
.faded { opacity: .45; }
.caret {
  width: 8px;
  height: 7px;
  background: #1a222c;
  clip-path: polygon(0 0, 100% 0, 50% 100%);
}

.titlebar {
  display: flex;
  align-items: center;
  gap: 8px;
  height: 22px;
  padding: 0 14px 0 7px;
  background: #f8faf9;
  font-size: 11px;
}
.app-mark {
  width: 16px;
  height: 16px;
  border-radius: 4px;
  background: #fdb913;
  color: #fff;
  font: 700 11px/16px "Noto Sans", sans-serif;
  text-align: center;
}
.window-buttons { display: flex; gap: 28px; margin-left: auto; }
.window-buttons svg { stroke: #111; }

.mainnav {
  display: flex;
  align-items: center;
  gap: 27px;
  height: 59px;
  padding: 0 24px 0 15px;
  background: #00001a;
  color: #667cab;
  font-size: 13px;
}
.mainnav a { color: inherit; text-decoration: none; }
.mainnav .current { border-bottom: 2px solid #f5a300; color: #f5a300; line-height: 16px; }
.logo { width: 28px; height: 28px; margin-right: 2px; stroke: #eef0f4; }
.logo-tips { fill: #eef0f4; stroke: none; }
.nav-add svg { stroke: #8393b5; }
.nav-end { display: flex; align-items: center; gap: 23px; margin-left: auto; }
.help {
  width: 21px;
  height: 21px;
  border-radius: 50%;
  background: #d9dbe3;
  color: #0b46c8;
  font-weight: 700;
  font-size: 16px;
  line-height: 21px;
}

.toolbar {
  display: flex;
  align-items: center;
  height: 42px;
  padding: 0 5px 0 2px;
  border-bottom: 1px solid #b9bcc0;
}
.tool { display: flex; align-items: center; justify-content: center; width: 37px; height: 37px; border-radius: 3px; }
.tool svg { width: 26px; height: 26px; }
.tool.wide { width: auto; padding-left: 5px; font-weight: 500; }
.tool.wide svg { margin-right: 6px; }
.tool.wide .caret { margin: 0 3px 0 4px; }
.tool-menus { display: flex; gap: 4px; }
.pressed { background: #aeb4be; border-radius: 3px; }
.sep { width: 1px; height: 32px; margin: 0 3px; background: #b4b8be; }
.gear { position: relative; }
.gear-text {
  position: absolute;
  top: 9px;
  left: 5px;
  padding-right: 1px;
  background: #fff;
  font-size: 13px;
  line-height: 18px;
}
.search {
  display: flex;
  align-items: center;
  width: 297px;
  height: 28px;
  margin-left: auto;
  padding: 0 8px 0 5px;
  border: 1px solid #7c838d;
  border-radius: 4px;
}
.search input { flex: 1; min-width: 0; padding: 0; border: 0; outline: 0; background: none; font: inherit; font-size: 13px; }
.search input::placeholder { color: #7b8087; opacity: 1; }

.workspace {
  display: grid;
  grid-template-columns: minmax(480px, 636px) minmax(0, 1fr);
  gap: 14px;
  padding-left: 14px;
}
.side { display: grid; gap: 13px; padding-top: 14px; }
.panel { border: 1px solid #b5bac3; background: #f8faf9; }
.panel-head { display: flex; align-items: center; gap: 4px; height: 34px; padding: 0 10px 0 7px; }
.panel-tools { display: flex; align-items: center; margin-left: auto; }
.panel-tools button { display: grid; place-items: center; width: 21px; height: 21px; }
.panel-tools button > svg { grid-area: 1 / 1; }
.panel-tools .slim { width: 15px; }
.panel-tools .win { width: 15px; margin-left: 7px; }
.minisep { width: 1px; height: 20px; margin: 0 4px; background: #b4b8be; }
.mark { stroke-width: 1.500; }
.green { stroke: #12b24a; }
.red { stroke: #d8262f; }
.azure { stroke: #1273e6; }
.solid { fill: #1a222c; stroke: none; }
.dot { fill: #6fd400; stroke: #55a800; }

.tree-view { display: flex; align-items: flex-end; height: 376px; overflow: hidden; }
.tree {
  flex: 1;
  display: grid;
  grid-auto-rows: 1fr;
  height: 384px;
  font-weight: 500;
  list-style: none;
}
.tree li { display: flex; align-items: center; gap: 4px; padding: 1px 0 0 5px; background: #fff; white-space: nowrap; }
.tree li:nth-child(odd) { background: #f8faf9; }
.tree li.selected { background: #cfe5ff; }
.tree li::before {
  content: "";
  width: 5px;
  height: 8px;
  margin-right: 5px;
  background: #0a1420;
  clip-path: polygon(0 0, 100% 50%, 0 100%);
}
.scroll { align-self: stretch; display: flex; flex-direction: column; width: 10px; background: #f0f2f1; }
.scroll.end { justify-content: flex-end; }
.thumb { background: #d9dce4; }
.tree-thumb { height: 39%; }
.table-thumb { height: 63%; }

.subject { display: flex; align-items: center; gap: 4px; height: 27px; margin-bottom: 5px; padding-left: 4px; font-size: 13px; }
.tabs { display: flex; }
.tabs button { padding: 0 11px; border: solid #b5bac3; border-width: 1px 1px 1px 0; font-weight: 500; }
.main-tabs button { height: 42px; background: #d9dce4; }
.sub-tabs button { height: 32px; background: #eceeed; }
.tabs .active { border-bottom: 3px solid #003cc8; font-weight: 600; }
.main-tabs .active { background: #f8faf9; }
.sub-tabs .active { background: #fff; }
.tabs .link { padding-right: 15px; color: #1557c0; }

.table-view { display: flex; height: 265px; overflow: hidden; }
.props { flex: 1; width: 100%; height: 281px; border-collapse: collapse; table-layout: fixed; }
.props th { height: 24px; padding: 0; border-bottom: 1px solid #b5bac3; background: #fff; font-weight: 400; }
.props td { height: 21px; padding: 0 3px; background: #fff; line-height: 16px; white-space: nowrap; }
.props tr > :first-child { border-right: 1px solid #b5bac3; }
.props tbody tr:nth-child(2) td, .props tbody tr:nth-child(4) td, .props tbody tr:nth-child(6) td,
.props tbody tr:nth-child(8) td, .props tbody tr:nth-child(10) td, .props tbody tr:nth-child(12) td { background: #f8faf9; }
.props td:first-child::before {
  content: "";
  display: inline-block;
  width: 10px;
  height: 7px;
  margin: 0 7px 2px 36px;
  border: solid #b4b8bc;
  border-width: 2px 0;
  vertical-align: middle;
}
.props .group td { font-weight: 600; }
.props .group td:first-child::before {
  width: 7px;
  height: 6px;
  margin: 0 8px 2px 1px;
  border: 0;
  background: #0a1420;
  clip-path: polygon(0 0, 100% 0, 50% 100%);
}
.props .filler td:first-child::before { display: none; }

.viewer { position: relative; min-width: 0; }
.scene { width: 100%; height: auto; stroke: none; }
.model path { vector-effect: non-scaling-stroke; }
.model .blue { fill: none; stroke: #1045cc; }
.model .yellow { fill: none; stroke: #d9cf1e; stroke-width: 1.500; }
.viewer-head {
  position: absolute;
  top: 21px;
  left: 6px;
  right: 24px;
  display: flex;
  align-items: center;
  gap: 5px;
}
.viewer-head .win { margin-left: auto; }
.minimap {
  position: absolute;
  right: 19px;
  bottom: 3px;
  width: 96px;
  background: rgba(240, 240, 240, .96);
}
.minimap-head { display: flex; align-items: flex-start; justify-content: space-between; height: 30px; }
.minimap-head h3 { padding: 1px 0 0 6px; font-weight: 500; white-space: nowrap; }
.plan { width: 96px; height: 66px; stroke: none; stroke-width: 1; }

.status {
  display: flex;
  justify-content: flex-end;
  gap: 47px;
  padding: 7px 170px 4px 14px;
}

.spotlight {
  position: absolute;
  inset: 0;
  width: 100%;
  height: 100%;
  fill: rgba(0, 0, 0, .196);
  stroke: none;
  pointer-events: none;
}
.step {
  position: absolute;
  width: 39px;
  height: 39px;
  border-radius: 50%;
  background: #577d8f;
  box-shadow: 1px 3px 4px rgba(0, 0, 0, .5);
  color: #fff;
  font-size: 28px;
  line-height: 39px;
  text-align: center;
}
.step-one { top: 454px; left: 145px; }
.step-two { top: 162px; left: 611px; }
```
